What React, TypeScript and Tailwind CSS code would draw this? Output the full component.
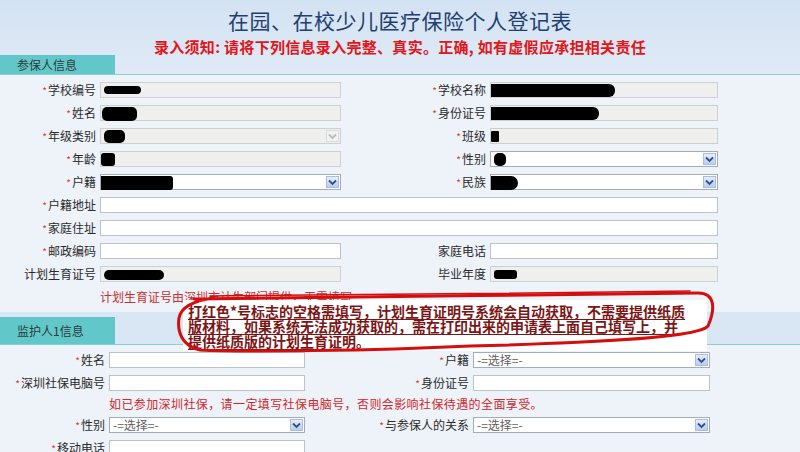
import React from "react";

type Kind = "ro" | "text" | "select" | "select-off";

function Chevron({ off }: { off?: boolean }) {
  return (
    <svg width="9" height="7" viewBox="0 0 9 7">
      <path d="M1 1.5 L4.5 5 L8 1.5" fill="none" stroke={off ? "#b7bcc2" : "#2f4f8f"} strokeWidth="1.8" />
    </svg>
  );
}

function Box({ kind, blob, hint, wide }: { kind: Kind; blob?: string; hint?: string; wide?: boolean }) {
  const base = "relative h-[16px] border flex items-center";
  const tone =
    kind === "ro"
      ? "bg-[#efefed] border-[#cdd0d3]"
      : kind === "text"
      ? "bg-white border-[#bcc2ca]"
      : kind === "select"
      ? "bg-white border-[#a3acb8]"
      : "bg-[#efefed] border-[#cdd0d3]";
  return (
    <div className={`${base} ${tone} ${wide ? "col-span-3" : ""}`}>
      {hint && <span className="pl-[3px] text-[12px] leading-none text-[#606060]">{hint}</span>}
      {blob && <div className={`absolute bg-black ${blob}`} />}
      {(kind === "select" || kind === "select-off") && (
        <div
          className={`absolute right-[1px] top-[1px] w-[13px] h-[12px] flex items-center justify-center border ${
            kind === "select"
              ? "bg-gradient-to-b from-[#e6eefb] to-[#b9cdee] border-[#a9bde0]"
              : "bg-[#f1f1ef] border-[#dcdcda]"
          }`}
        >
          <Chevron off={kind === "select-off"} />
        </div>
      )}
    </div>
  );
}

function Label({ text, star = true }: { text: string; star?: boolean }) {
  return (
    <div className="text-right text-[12px] leading-[16px] text-[#2b2b2b] whitespace-nowrap">
      {star && <span className="text-[#d83a3a] text-[10px] mr-[1px]">*</span>}
      {text}
    </div>
  );
}

function Band({ title, tall }: { title: string; tall?: boolean }) {
  return (
    <div className={`flex items-end border-b border-[#86cfd4] ${tall ? "h-[33px] bg-[#d9e6f3]" : ""}`}>
      <div
        className={`w-[115px] bg-[#62c7c9] text-[12px] text-[#2d3b3b] pl-[17px] ${
          tall ? "h-[27px] leading-[27px]" : "h-[19px] leading-[19px]"
        }`}
      >
        {title}
      </div>
    </div>
  );
}

export default function App() {
  return (
    <div className="relative w-[800px] h-[452px] overflow-hidden bg-[#eef2f9] font-['Noto_Sans_CJK_SC','Noto_Sans',sans-serif]">
      {/* page heading */}
      <div className="h-[74px] flex flex-col bg-gradient-to-b from-[#d3e2f2] to-[#e0eaf6]">
        <h1 className="pt-[6px] text-center text-[21px] leading-[28px] text-[#213f70] tracking-[0.5px]">
          在园、在校少儿医疗保险个人登记表
        </h1>
        <p className="mt-[5px] text-center text-[15px] leading-[16px] font-bold text-[#e0161b] tracking-[0.3px]">
          录入须知: 请将下列信息录入完整、真实。正确, 如有虚假应承担相关责任
        </p>
        <div className="mt-auto">
          <Band title="参保人信息" />
        </div>
      </div>

      {/* insured person */}
      <div className="pt-[8px] grid grid-cols-[96px_241px_141px_228px] gap-x-[4px] gap-y-[7px] auto-rows-[16px]">
        <Label text="学校编号" />
        <Box kind="ro" blob="left-[3px] top-[3px] w-[37px] h-[8px] rounded-[4px]" />
        <Label text="学校名称" />
        <Box kind="ro" blob="left-0 top-[1px] w-[124px] h-[13px] rounded-r-[6px]" />

        <Label text="姓名" />
        <Box kind="ro" blob="left-[1px] top-[1px] w-[35px] h-[14px] rounded-[5px]" />
        <Label text="身份证号" />
        <Box kind="ro" blob="left-0 top-[1px] w-[108px] h-[13px] rounded-r-[6px]" />

        <Label text="年级类别" />
        <Box kind="select-off" blob="left-[3px] top-[1px] w-[21px] h-[13px] rounded-[5px]" />
        <Label text="班级" />
        <Box kind="ro" blob="left-0 top-[2px] w-[8px] h-[11px] rounded-[1px]" />

        <Label text="年龄" />
        <Box kind="ro" blob="left-0 top-[1px] w-[14px] h-[13px] rounded-[3px]" />
        <Label text="性别" />
        <Box kind="select" blob="left-[3px] top-[1px] w-[12px] h-[13px] rounded-[5px]" />

        <Label text="户籍" />
        <Box kind="select" blob="left-0 top-[1px] w-[72px] h-[14px] rounded-r-[3px]" />
        <Label text="民族" />
        <Box kind="select" blob="left-0 top-[1px] w-[27px] h-[14px] rounded-r-[7px]" />

        <Label text="户籍地址" />
        <Box kind="text" wide />

        <Label text="家庭住址" />
        <Box kind="text" wide />

        <Label text="邮政编码" />
        <Box kind="text" />
        <Label text="家庭电话" star={false} />
        <Box kind="text" />

        <Label text="计划生育证号" star={false} />
        <Box kind="ro" blob="left-[3px] top-[3px] w-[60px] h-[10px] rounded-full" />
        <Label text="毕业年度" star={false} />
        <Box kind="ro" blob="left-[3px] top-[3px] w-[23px] h-[9px] rounded-[3px]" />

        <div />
        <div className="col-span-3 text-[12px] leading-[16px] text-[#c8302f]">
          计划生育证号由深圳市计生部门提供，无需填写
        </div>
      </div>

      {/* guardian */}
      <div className="mt-[7px]">
        <Band title="监护人1信息" tall />
      </div>
      <div className="pt-[7px] grid grid-cols-[105px_196px_160px_237px] gap-x-[4px] gap-y-[7px] grid-rows-[16px_16px_12px_16px_16px]">
        <Label text="姓名" />
        <Box kind="text" />
        <Label text="户籍" />
        <Box kind="select" hint="-=选择=-" />

        <Label text="深圳社保电脑号" />
        <Box kind="text" />
        <Label text="身份证号" />
        <Box kind="text" />

        <div />
        <div className="col-span-3 text-[12px] leading-[12px] text-[#d1282b] tracking-[0.4px]">
          如已参加深圳社保，请一定填写社保电脑号，否则会影响社保待遇的全面享受。
        </div>

        <Label text="性别" />
        <Box kind="select" hint="-=选择=-" />
        <Label text="与参保人的关系" />
        <Box kind="select" hint="-=选择=-" />

        <Label text="移动电话" />
        <Box kind="text" />
      </div>

      {/* hand-written remark */}
      <div className="absolute left-[183px] top-[300px] w-[524px] h-[51px] bg-white pl-[5px] pt-[4px]">
        <div className="text-[14px] leading-[15px] font-semibold text-[#7a1616] underline underline-offset-[2px] whitespace-nowrap">
          <div>打红色*号标志的空格需填写，计划生育证明号系统会自动获取，不需要提供纸质</div>
          <div>版材料，如果系统无法成功获取的，需在打印出来的申请表上面自己填写上，并</div>
          <div>提供纸质版的计划生育证明。</div>
        </div>
      </div>
      <svg className="absolute left-[170px] top-[286px]" width="552" height="76" viewBox="0 0 552 76">
        <path
          d="M24 13 C130 11 380 9 528 7 C546 7 545 24 538 40 C528 52 420 57 300 60 C200 65 70 66 30 64 C12 60 7 46 9 32 C11 22 20 15 44 12"
          fill="none"
          stroke="#d40d0d"
          strokeWidth="3"
          strokeLinecap="round"
        />
        <path
          d="M40 10 C160 9 380 7 520 5"
          fill="none"
          stroke="#d40d0d"
          strokeWidth="1.5"
          strokeLinecap="round"
        />
      </svg>
    </div>
  );
}
